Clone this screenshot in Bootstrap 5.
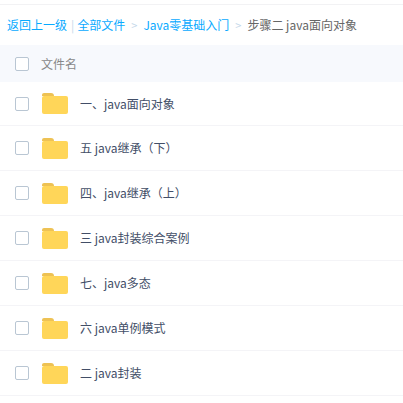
<!DOCTYPE html>
<html>
<head>
    <title>文件列表</title>
    <link href="https://cdn.jsdelivr.net/npm/bootstrap@5.3.3/dist/css/bootstrap.min.css" rel="stylesheet">
    <style>
        body { font-family: "Noto Sans CJK SC", "Liberation Sans", sans-serif; font-size: 12px; color: #424e67; overflow: hidden; }
        .top-rule { height: 5px; border-bottom: 1px solid #f2f2f4; }
        .crumbs { height: 40px; padding-left: 7px; color: #666; }
        .crumbs a { color: #09aaff; text-decoration: none; }
        .crumb-bar { color: #c5d8ea; margin: 0 3px 0 4px; }
        .crumb-sep { color: #c5d8ea; font-size: 11px; margin: 0 6px; }
        .head-row { height: 37px; background: #f7f9fd; color: #888; padding-left: 15px; }
        .file-row { height: 45px; padding-left: 15px; border-bottom: 1px solid #f4f4f7; }
        .file-row:first-child { height: 44px; }
        .tick { width: 14px; height: 14px; border: 1px solid #b9c6d3; border-radius: 2px; background: #fff; flex-shrink: 0; }
        .head-row .tick { margin-right: 12px; }
        .folder { width: 26px; height: 21px; margin: 0 12px 0 13px; flex-shrink: 0; }
    </style>
</head>
<body>
    <div class="top-rule"></div>
    <div class="crumbs d-flex align-items-center">
        <a href="#">返回上一级</a><span class="crumb-bar">|</span><a href="#">全部文件</a>
        <span class="crumb-sep">&gt;</span><a href="#">Java零基础入门</a>
        <span class="crumb-sep">&gt;</span><span>步骤二 java面向对象</span>
    </div>
    <div class="head-row d-flex align-items-center">
        <span class="tick"></span><span>文件名</span>
    </div>
    <div id="files"></div>

    <script src="https://cdn.jsdelivr.net/npm/bootstrap@5.3.3/dist/js/bootstrap.bundle.min.js"></script>
    <script>
        const names = ['一、java面向对象', '五 java继承（下）', '四、java继承（上）', '三 java封装综合案例', '七、java多态', '六 java单例模式', '二 java封装'];
        const folder = '<svg class="folder" viewBox="0 0 26 21"><path d="M0 2a2 2 0 0 1 2-2h7a3 3 0 0 1 3 3h-12z" fill="#eec254"/><rect y="3" width="26" height="18" rx="2" fill="#ffd659"/></svg>';
        document.getElementById('files').innerHTML = names.map(n =>
            '<div class="file-row d-flex align-items-center"><span class="tick"></span>' + folder + '<span>' + n + '</span></div>'
        ).join('');
    </script>
</body>
</html>
